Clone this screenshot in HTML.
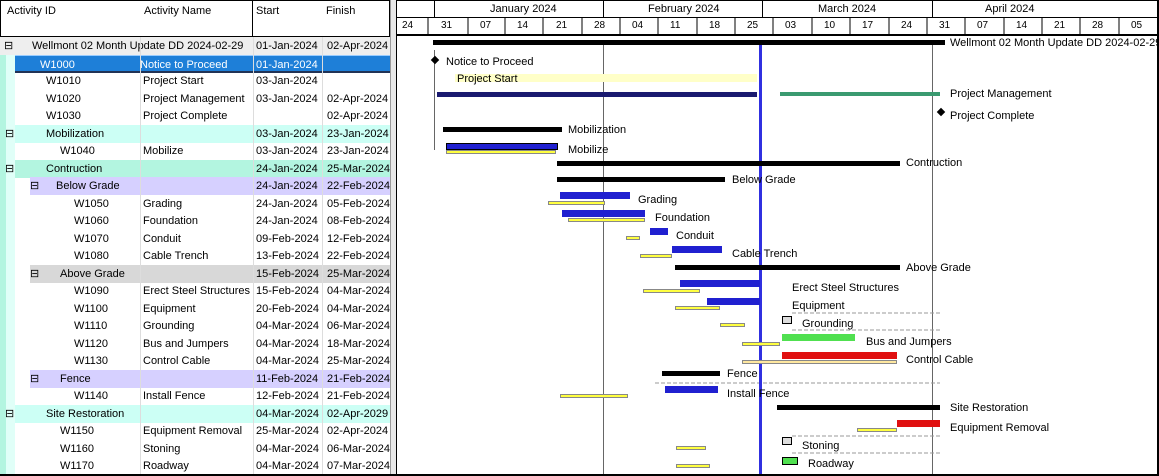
<!DOCTYPE html><html><head><meta charset="utf-8"><style>
*{margin:0;padding:0;box-sizing:border-box}
body{width:1159px;height:476px;overflow:hidden;background:#fff;font:11px "Liberation Sans",sans-serif;color:#000;position:relative}
.a{position:absolute;white-space:nowrap}
.r{position:absolute;left:0;width:390px;height:18px;line-height:18px}
.r span{position:absolute;white-space:nowrap}
.hd{background:#fff;border-right:1px solid #000;border-bottom:1px solid #000}
.b{position:absolute;height:7px}
.y{position:absolute;height:4px;background:#ffff40;border:1px solid #888}
.s{position:absolute;height:5px;background:#000}
.l{position:absolute;line-height:12px;white-space:nowrap}
.w{position:absolute;top:20px;font-size:10px}
</style></head><body>
<div class="a hd" style="left:0;top:0;width:141px;height:37px;border-top:1px solid #000;border-left:1px solid #000"><span class="a" style="left:6px;top:4px">Activity ID</span></div>
<div class="a hd" style="left:140px;top:0;width:113px;height:37px;border-top:1px solid #000"><span class="a" style="left:4px;top:4px">Activity Name</span></div>
<div class="a hd" style="left:253px;top:0;width:70px;height:37px;border-top:1px solid #000"><span class="a" style="left:3px;top:4px">Start</span></div>
<div class="a hd" style="left:322px;top:0;width:68px;height:37px;border-top:1px solid #000"><span class="a" style="left:4px;top:4px">Finish</span></div>
<div class="a" style="left:390px;top:0;width:7px;height:476px;background:#e8e8e8;border-left:1px solid #999;border-right:1px solid #000"></div>
<div class="a" style="left:0;top:54px;width:6px;height:422px;background:#b3f5e0"></div>
<div class="a" style="left:6px;top:54px;width:9px;height:422px;background:#e0fff8"></div>
<div class="r" style="top:37px;background:#eee"><span style="left:4px">⊟</span><span style="left:32px">Wellmont 02 Month Update DD 2024-02-29</span><span style="left:256px">01-Jan-2024</span><span style="left:327px">02-Apr-2024</span></div>
<div class="r" style="top:54.5px;left:15px;width:375px;background:#1e7fd8;color:#fff;border-top:1px solid #9cf;border-bottom:2px solid #235"><span style="left:25px">W1000</span><span style="left:125px">Notice to Proceed</span><span style="left:241px">01-Jan-2024</span></div>
<div class="r" style="top:72px;left:15px;width:375px"><span style="left:31px">W1010</span><span style="left:128px">Project Start</span><span style="left:241px">03-Jan-2024</span></div>
<div class="r" style="top:89.5px;left:15px;width:375px"><span style="left:31px">W1020</span><span style="left:128px">Project Management</span><span style="left:241px">03-Jan-2024</span><span style="left:312px">02-Apr-2024</span></div>
<div class="r" style="top:107px;left:15px;width:375px"><span style="left:31px">W1030</span><span style="left:128px">Project Complete</span><span style="left:312px">02-Apr-2024</span></div>
<div class="r" style="top:124.5px;left:15px;width:375px;background:#ccfff5"><span style="left:-10px">⊟</span><span style="left:31px">Mobilization</span><span style="left:241px">03-Jan-2024</span><span style="left:312px">23-Jan-2024</span></div>
<div class="r" style="top:142px;left:15px;width:375px"><span style="left:45px">W1040</span><span style="left:128px">Mobilize</span><span style="left:241px">03-Jan-2024</span><span style="left:312px">23-Jan-2024</span></div>
<div class="r" style="top:159.5px;left:15px;width:375px;background:#b3f5e0"><span style="left:-10px">⊟</span><span style="left:31px">Contruction</span><span style="left:241px">24-Jan-2024</span><span style="left:312px">25-Mar-2024</span></div>
<div class="r" style="top:177px;left:30px;width:360px;background:#d6d0ff"><span style="left:0">⊟</span><span style="left:26px">Below Grade</span><span style="left:226px">24-Jan-2024</span><span style="left:297px">22-Feb-2024</span></div>
<div class="r" style="top:194.5px;left:30px;width:360px"><span style="left:44px">W1050</span><span style="left:113px">Grading</span><span style="left:226px">24-Jan-2024</span><span style="left:297px">05-Feb-2024</span></div>
<div class="r" style="top:212px;left:30px;width:360px"><span style="left:44px">W1060</span><span style="left:113px">Foundation</span><span style="left:226px">24-Jan-2024</span><span style="left:297px">08-Feb-2024</span></div>
<div class="r" style="top:229.5px;left:30px;width:360px"><span style="left:44px">W1070</span><span style="left:113px">Conduit</span><span style="left:226px">09-Feb-2024</span><span style="left:297px">12-Feb-2024</span></div>
<div class="r" style="top:247px;left:30px;width:360px"><span style="left:44px">W1080</span><span style="left:113px">Cable Trench</span><span style="left:226px">13-Feb-2024</span><span style="left:297px">22-Feb-2024</span></div>
<div class="r" style="top:264.5px;left:30px;width:360px;background:#d8d8d8"><span style="left:0">⊟</span><span style="left:30px">Above Grade</span><span style="left:226px">15-Feb-2024</span><span style="left:297px">25-Mar-2024</span></div>
<div class="r" style="top:282px;left:30px;width:360px"><span style="left:44px">W1090</span><span style="left:113px">Erect Steel Structures</span><span style="left:226px">15-Feb-2024</span><span style="left:297px">04-Mar-2024</span></div>
<div class="r" style="top:299.5px;left:30px;width:360px"><span style="left:44px">W1100</span><span style="left:113px">Equipment</span><span style="left:226px">20-Feb-2024</span><span style="left:297px">04-Mar-2024</span></div>
<div class="r" style="top:317px;left:30px;width:360px"><span style="left:44px">W1110</span><span style="left:113px">Grounding</span><span style="left:226px">04-Mar-2024</span><span style="left:297px">06-Mar-2024</span></div>
<div class="r" style="top:334.5px;left:30px;width:360px"><span style="left:44px">W1120</span><span style="left:113px">Bus and Jumpers</span><span style="left:226px">04-Mar-2024</span><span style="left:297px">18-Mar-2024</span></div>
<div class="r" style="top:352px;left:30px;width:360px"><span style="left:44px">W1130</span><span style="left:113px">Control Cable</span><span style="left:226px">04-Mar-2024</span><span style="left:297px">25-Mar-2024</span></div>
<div class="r" style="top:369.5px;left:30px;width:360px;background:#d6d0ff"><span style="left:0">⊟</span><span style="left:30px">Fence</span><span style="left:226px">11-Feb-2024</span><span style="left:297px">21-Feb-2024</span></div>
<div class="r" style="top:387px;left:30px;width:360px"><span style="left:44px">W1140</span><span style="left:113px">Install Fence</span><span style="left:226px">12-Feb-2024</span><span style="left:297px">21-Feb-2024</span></div>
<div class="r" style="top:404.5px;left:15px;width:375px;background:#ccfff5"><span style="left:-10px">⊟</span><span style="left:31px">Site Restoration</span><span style="left:241px">04-Mar-2024</span><span style="left:312px">02-Apr-2029</span></div>
<div class="r" style="top:422px;left:15px;width:375px"><span style="left:45px">W1150</span><span style="left:128px">Equipment Removal</span><span style="left:241px">25-Mar-2024</span><span style="left:312px">02-Apr-2024</span></div>
<div class="r" style="top:439.5px;left:15px;width:375px"><span style="left:45px">W1160</span><span style="left:128px">Stoning</span><span style="left:241px">04-Mar-2024</span><span style="left:312px">06-Mar-2024</span></div>
<div class="r" style="top:457px;left:15px;width:375px"><span style="left:45px">W1170</span><span style="left:128px">Roadway</span><span style="left:241px">04-Mar-2024</span><span style="left:312px">07-Mar-2024</span></div>
<div class="a" style="left:140px;top:37px;width:1px;height:439px;background:#ddd"></div>
<div class="a" style="left:253px;top:37px;width:1px;height:439px;background:#ddd"></div>
<div class="a" style="left:322px;top:37px;width:1px;height:439px;background:#ddd"></div>

<div class="a" style="left:397px;top:0;width:762px;height:36px;border-top:1px solid #000;border-bottom:2px solid #000;background:#fff"></div>
<div class="a" style="left:397px;top:17px;width:762px;height:1px;background:#000"></div>
<div class="a" style="left:434px;top:1px;width:1px;height:16px;background:#000"></div>
<div class="a" style="left:603px;top:1px;width:1px;height:16px;background:#000"></div>
<div class="a" style="left:762px;top:1px;width:1px;height:16px;background:#000"></div>
<div class="a" style="left:932px;top:1px;width:1px;height:16px;background:#000"></div>
<div class="a" style="left:490px;top:3px">January 2024</div>
<div class="a" style="left:648px;top:3px">February 2024</div>
<div class="a" style="left:818px;top:3px">March 2024</div>
<div class="a" style="left:985px;top:3px">April 2024</div>
<span class="w" style="left:402px">24</span><span class="w" style="left:441px">31</span><span class="w" style="left:480px">07</span><span class="w" style="left:517px">14</span><span class="w" style="left:556px">21</span><span class="w" style="left:594px">28</span><span class="w" style="left:632px">04</span><span class="w" style="left:670px">11</span><span class="w" style="left:709px">18</span><span class="w" style="left:747px">25</span><span class="w" style="left:785px">03</span><span class="w" style="left:824px">10</span><span class="w" style="left:862px">17</span><span class="w" style="left:901px">24</span><span class="w" style="left:939px">31</span><span class="w" style="left:977px">07</span><span class="w" style="left:1016px">14</span><span class="w" style="left:1054px">21</span><span class="w" style="left:1092px">28</span><span class="w" style="left:1131px">05</span>
<svg class="a" style="left:0;top:0" width="1159" height="476">
<g stroke="#000" stroke-width="1">
<line x1="428" y1="18" x2="428" y2="35"/><line x1="468" y1="18" x2="468" y2="35"/><line x1="505" y1="18" x2="505" y2="35"/><line x1="543" y1="18" x2="543" y2="35"/><line x1="582" y1="18" x2="582" y2="35"/><line x1="620" y1="18" x2="620" y2="35"/><line x1="658" y1="18" x2="658" y2="35"/><line x1="697" y1="18" x2="697" y2="35"/><line x1="735" y1="18" x2="735" y2="35"/><line x1="773" y1="18" x2="773" y2="35"/><line x1="812" y1="18" x2="812" y2="35"/><line x1="850" y1="18" x2="850" y2="35"/><line x1="889" y1="18" x2="889" y2="35"/><line x1="927" y1="18" x2="927" y2="35"/><line x1="965" y1="18" x2="965" y2="35"/><line x1="1004" y1="18" x2="1004" y2="35"/><line x1="1042" y1="18" x2="1042" y2="35"/><line x1="1080" y1="18" x2="1080" y2="35"/><line x1="1119" y1="18" x2="1119" y2="35"/>
</g>
<g stroke="#666"><line x1="603.5" y1="40" x2="603.5" y2="476"/><line x1="932.5" y1="40" x2="932.5" y2="476"/><line x1="434.5" y1="50" x2="434.5" y2="150"/></g>
<g stroke="#999" stroke-dasharray="4,2"><line x1="792" y1="313" x2="940" y2="313"/><line x1="792" y1="330" x2="940" y2="330"/><line x1="655" y1="383" x2="940" y2="383"/><line x1="792" y1="436" x2="940" y2="436"/><line x1="792" y1="453" x2="940" y2="453"/></g>
<rect x="759" y="40" width="3" height="436" fill="#3030e0"/>
</svg>
<div class="s" style="left:433px;top:40px;width:512px"></div>
<div class="l" style="left:950px;top:37px">Wellmont 02 Month Update DD 2024-02-29</div>
<div class="a" style="left:432px;top:57px;width:6px;height:6px;background:#000;transform:rotate(45deg)"></div>
<div class="l" style="left:446px;top:56px">Notice to Proceed</div>
<div class="a" style="left:455px;top:74px;width:302px;height:8px;background:#ffffc8"></div>
<div class="l" style="left:457px;top:73px">Project Start</div>
<div class="b" style="left:437px;top:92px;width:320px;height:5px;background:#1a1a70"></div>
<div class="b" style="left:780px;top:92px;width:160px;height:4px;background:#3a9a70"></div>
<div class="l" style="left:950px;top:88px">Project Management</div>
<div class="a" style="left:938px;top:109px;width:6px;height:6px;background:#000;transform:rotate(45deg)"></div>
<div class="l" style="left:950px;top:110px">Project Complete</div>
<div class="s" style="left:443px;top:127px;width:119px"></div>
<div class="l" style="left:568px;top:124px">Mobilization</div>
<div class="b" style="left:446px;top:143px;width:112px;background:#2020d0;border:1px solid #000"></div>
<div class="y" style="left:446px;top:150px;width:110px"></div>
<div class="l" style="left:568px;top:144px">Mobilize</div>
<div class="s" style="left:557px;top:161px;width:343px"></div>
<div class="l" style="left:906px;top:157px">Contruction</div>
<div class="s" style="left:557px;top:177px;width:168px"></div>
<div class="l" style="left:732px;top:174px">Below Grade</div>
<div class="b" style="left:560px;top:192px;width:70px;background:#2020d0"></div>
<div class="y" style="left:548px;top:201px;width:57px"></div>
<div class="l" style="left:638px;top:194px">Grading</div>
<div class="b" style="left:562px;top:210px;width:83px;background:#2020d0"></div>
<div class="y" style="left:568px;top:218px;width:77px"></div>
<div class="l" style="left:655px;top:212px">Foundation</div>
<div class="b" style="left:650px;top:228px;width:18px;background:#2020d0"></div>
<div class="y" style="left:626px;top:236px;width:14px"></div>
<div class="l" style="left:676px;top:230px">Conduit</div>
<div class="b" style="left:672px;top:246px;width:50px;background:#2020d0"></div>
<div class="y" style="left:640px;top:254px;width:32px"></div>
<div class="l" style="left:732px;top:248px">Cable Trench</div>
<div class="s" style="left:675px;top:265px;width:225px"></div>
<div class="l" style="left:906px;top:262px">Above Grade</div>
<div class="b" style="left:680px;top:280px;width:80px;background:#2020d0"></div>
<div class="y" style="left:643px;top:289px;width:57px"></div>
<div class="l" style="left:792px;top:282px">Erect Steel Structures</div>
<div class="b" style="left:707px;top:298px;width:53px;background:#2020d0"></div>
<div class="y" style="left:675px;top:306px;width:45px"></div>
<div class="l" style="left:792px;top:300px">Equipment</div>
<div class="y" style="left:720px;top:323px;width:25px"></div>
<div class="a" style="left:782px;top:316px;width:10px;height:8px;border:1px solid #000;background:#ddd"></div>
<div class="l" style="left:802px;top:318px">Grounding</div>
<div class="b" style="left:782px;top:334px;width:73px;background:#50e050"></div>
<div class="y" style="left:742px;top:342px;width:38px"></div>
<div class="l" style="left:866px;top:336px">Bus and Jumpers</div>
<div class="b" style="left:782px;top:352px;width:115px;background:#e01010"></div>
<div class="y" style="left:742px;top:360px;width:155px;background:#ffe8a0"></div>
<div class="l" style="left:906px;top:354px">Control Cable</div>
<div class="s" style="left:662px;top:371px;width:58px"></div>
<div class="l" style="left:727px;top:368px">Fence</div>
<div class="b" style="left:665px;top:386px;width:53px;background:#2020d0"></div>
<div class="y" style="left:560px;top:394px;width:68px"></div>
<div class="l" style="left:727px;top:388px">Install Fence</div>
<div class="s" style="left:777px;top:405px;width:163px"></div>
<div class="l" style="left:950px;top:402px">Site Restoration</div>
<div class="b" style="left:897px;top:420px;width:43px;background:#e01010"></div>
<div class="y" style="left:857px;top:428px;width:40px"></div>
<div class="l" style="left:950px;top:422px">Equipment Removal</div>
<div class="a" style="left:782px;top:437px;width:10px;height:8px;border:1px solid #000;background:#ddd"></div>
<div class="y" style="left:676px;top:446px;width:30px"></div>
<div class="l" style="left:802px;top:440px">Stoning</div>
<div class="b" style="left:782px;top:457px;width:16px;height:8px;background:#50e050;border:1px solid #000"></div>
<div class="y" style="left:676px;top:464px;width:34px"></div>
<div class="l" style="left:808px;top:458px">Roadway</div>
<div class="a" style="left:0;top:474px;width:1159px;height:2px;background:#000"></div>
<div class="a" style="left:1157px;top:0;width:2px;height:476px;background:#000"></div>
</body></html>
